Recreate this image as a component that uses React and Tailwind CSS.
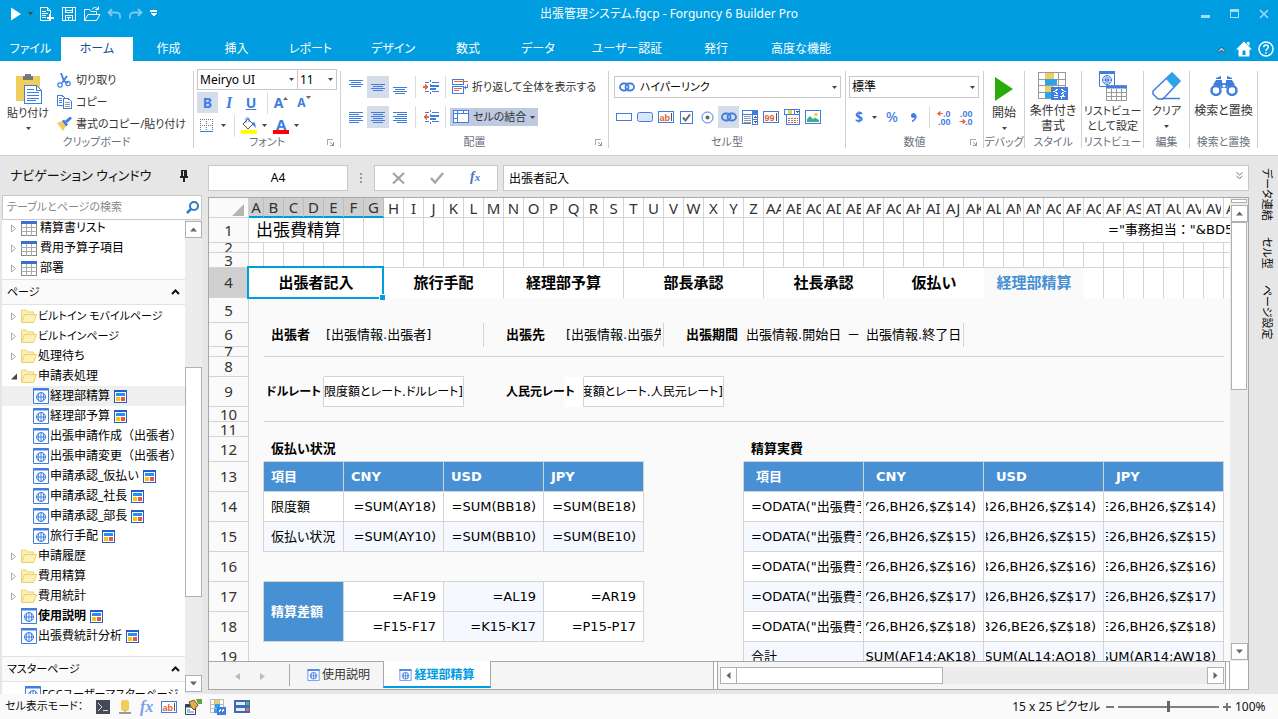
import React from "react";

const BLUE = "#3f7ee0";

/* ---------- small shared drawings ---------- */

function Svg({ w, h, children, crisp = true, className = "" }) {
  return (
    <svg
      width={w}
      height={h}
      viewBox={`0 0 ${w} ${h}`}
      fill="none"
      shapeRendering={crisp ? "crispEdges" : "auto"}
      className={`shrink-0 ${className}`}
      aria-hidden="true"
    >
      {children}
    </svg>
  );
}

const Caret = ({ className = "" }) => (
  <Svg w={5} h={3} crisp={false} className={className}>
    <path d="M0 0H5L2.500 3Z" fill="#444" />
  </Svg>
);

const Launcher = () => (
  <Svg w={7} h={7}>
    <path d="M0.500 6V0.500H6" stroke="#aaa" />
    <path d="M3 3H4V4H3ZM4 4H5V5H4ZM7 3V7H3V6H5V5H6V3Z" fill="#999" />
  </Svg>
);

/* ---------- title bar ---------- */

function TitleBar() {
  return (
    <div className="flex h-[37px] items-center text-white">
      <div className="flex flex-1 items-center pb-[10px] pl-[11px]">
        <button aria-label="実行" className="flex">
          <Svg w={10} h={14} crisp={false}><path d="M0 0.500L10 7L0 13.500Z" fill="#fff" /></Svg>
        </button>
        <Caret className="mx-[7px]" />
        <button aria-label="新規" className="mr-2 flex">
          <Svg w={14} h={15}>
            <path d="M9.500 14.500H0.500V1.500H7.500L10.500 4.500V8M2 5.500H6M2 7.500H8M2 9.500H6M2 11.500H6M7.500 1V4.500H10" stroke="#fff" />
            <path d="M10 8V15M7 12H14" stroke="#fff" strokeWidth="2" />
          </Svg>
        </button>
        <button aria-label="保存" className="mr-2 flex">
          <Svg w={14} h={15}>
            <path d="M0.500 1.500H13.500V14.500H0.500ZM3.500 1.500V6.500H10.500V1.500M3.500 14.500V9.500H10.500V14.500M5 11.500H9M6.500 12V14.500" stroke="#fff" />
            <path d="M3 4.500H11" stroke="#fff" />
          </Svg>
        </button>
        <button aria-label="開く" className="mr-[6px] flex">
          <Svg w={17} h={16} crisp={false}>
            <path d="M0.500 14.500V3.500H5.500L7 5.500H12.500V8M0.500 14.500L4 8.500H16L12.500 14.500Z" stroke="#fff" />
            <path d="M8 3.500C9.500 1 12 1 14 3M14.500 0.500V3.500H11.500" stroke="#fff" />
          </Svg>
        </button>
        <button aria-label="元に戻す" className="mr-2 flex">
          <Svg w={14} h={12} crisp={false}>
            <path d="M5 1L1.500 4.500L5 8M1.500 4.500H9C12 4.500 13.500 6 13 10.500" stroke="#7ec8f0" strokeWidth="1.800" />
          </Svg>
        </button>
        <button aria-label="やり直し" className="mr-[7px] flex">
          <Svg w={14} h={12} crisp={false}>
            <path d="M9 1L12.500 4.500L9 8M12.500 4.500H5C2 4.500 0.500 6 1 10.500" stroke="#7ec8f0" strokeWidth="1.800" />
          </Svg>
        </button>
        <Svg w={7} h={7}><path d="M0 1H7" stroke="#fff" strokeWidth="2" /><path d="M0 3H7L3.500 6.500Z" fill="#fff" /></Svg>
      </div>
      <h1 className="pb-[10px] pl-[58px] text-xs leading-4">出張管理システム.fgcp - Forguncy 6 Builder Pro</h1>
      <div className="flex flex-1 items-center justify-end gap-5 pb-[10px] pr-[9px]">
        <button aria-label="最小化" className="flex"><Svg w={9} h={9}><path d="M0 7.500H9" stroke="#a5dbf6" strokeWidth="3" /></Svg></button>
        <button aria-label="最大化" className="flex"><Svg w={9} h={9}><path d="M0.500 0.500H8.500V8.500H0.500Z" stroke="#a5dbf6" /><path d="M0 1.500H9" stroke="#a5dbf6" strokeWidth="3" /></Svg></button>
        <button aria-label="閉じる" className="flex"><Svg w={10} h={10} crisp={false}><path d="M1 1L9 9M9 1L1 9" stroke="#a5dbf6" strokeWidth="1.500" /></Svg></button>
      </div>
    </div>
  );
}

const TABS = [
  ["ファイル", "w-[61px]"], ["ホーム", "w-[72px]"], ["作成", "w-[71px]"], ["挿入", "w-[65px]"],
  ["レポート", "w-[83px]"], ["デザイン", "w-[82px]"], ["数式", "w-[68px]"], ["データ", "w-[72px]"],
  ["ユーザー認証", "w-[106px]"], ["発行", "w-[72px]"], ["高度な機能", "w-[98px]"],
];

function RibbonTabs() {
  return (
    <nav className="flex h-6 items-stretch">
      {TABS.map(([name, w]) => (
        <button
          key={name}
          className={`${w} text-center text-xs leading-6 ${name === "ホーム" ? "bg-white text-[#1a4f9c]" : "text-white"}`}
        >
          {name}
        </button>
      ))}
      <div className="ml-auto flex items-center gap-[6px] pr-1">
        <button aria-label="リボンを折りたたむ" className="mr-1 flex">
          <Svg w={9} h={7} crisp={false}><path d="M0.500 5L4.500 1L8.500 5L7 6.500L4.500 4L2 6.500Z" fill="#a5dbf6" stroke="#345" strokeWidth="1" /></Svg>
        </button>
        <button aria-label="ホーム画面" className="flex">
          <Svg w={16} h={16} crisp={false}>
            <path d="M8 0.500L16 8.500H13.500V15.500H2.500V8.500H0L8 0.500Z" fill="#fff" />
            <path d="M11 1H13.500V5L11 3Z" fill="#fff" />
            <path d="M6.500 9.500H9.500V14H6.500Z" fill="#009de1" />
          </Svg>
        </button>
        <button aria-label="ヘルプ" className="flex">
          <Svg w={16} h={16} crisp={false}>
            <circle cx="8" cy="8" r="7" stroke="#fff" strokeWidth="1.500" />
            <path d="M5.800 6.200C5.800 3.400 10.300 3.400 10.300 6.200C10.300 7.800 8 7.800 8 10M8 11.300V12.800" stroke="#fff" strokeWidth="1.500" />
          </Svg>
        </button>
      </div>
    </nav>
  );
}

/* ---------- ribbon ---------- */

function Group({ label, width, launcher, children }) {
  return (
    <>
      <section className={`flex shrink-0 flex-col ${width}`}>
        <div className="h-16">{children}</div>
        <div className="relative flex h-[18px] items-center">
          <h2 className="flex-1 text-center text-[11px] leading-[18px] text-[#6a7180]">{label}</h2>
          {launcher && <button aria-label={`${label}の詳細`} className="absolute right-[6px] flex"><Launcher /></button>}
        </div>
      </section>
      <div className="mt-0.5 h-[77px] w-px shrink-0 bg-[#d0d0d0]" />
    </>
  );
}

const VLine = ({ className = "" }) => <div className={`h-[22px] w-px shrink-0 bg-[#dcdcdc] ${className}`} />;

function Drop({ label, value, width, icon, className = "", textClass = "text-xs" }) {
  return (
    <div className={`relative flex items-center border border-[#c8c8c8] bg-white ${width} ${className}`}>
      {icon && <span className="flex pl-1 pr-[3px]">{icon}</span>}
      <select aria-label={label} defaultValue={value} className={`h-full w-full appearance-none bg-transparent pl-[2px] leading-4 text-black outline-none ${textClass}`}>
        <option>{value}</option>
      </select>
      <Caret className="pointer-events-none absolute right-[3px]" />
    </div>
  );
}

const Lines = ({ rows }) => (
  <Svg w={14} h={14}>
    {rows.map(([x, y, w]) => <path key={y} d={`M${x} ${y}h${w}v1h-${w}z`} fill={BLUE} />)}
  </Svg>
);

const V_TOP = [[0, 0, 14], [2, 2, 10], [0, 4, 14], [2, 6, 10]];
const V_MID = [[0, 4, 14], [2, 6, 10], [0, 8, 14], [2, 10, 10]];
const V_BOT = [[0, 7, 14], [2, 9, 10], [0, 11, 14], [2, 13, 10]];
const H_LEFT = [[0, 2, 14], [0, 4, 10], [0, 6, 14], [0, 8, 12], [0, 10, 14], [0, 12, 10]];
const H_MID = [[0, 2, 14], [2, 4, 10], [0, 6, 14], [2, 8, 10], [0, 10, 14], [2, 12, 10]];
const H_RIGHT = [[0, 2, 14], [4, 4, 10], [0, 6, 14], [2, 8, 12], [0, 10, 14], [4, 12, 10]];

function IconButton({ label, active, width = "w-[22px]", children }) {
  return (
    <button aria-label={label} className={`flex h-[22px] shrink-0 items-center justify-center ${width} ${active ? "bg-[#d5dcea]" : ""}`}>
      {children}
    </button>
  );
}

const Indent = ({ out }) => (
  <Svg w={16} h={14}>
    <path d="M7 0H8V2H7ZM7 4H8V6H7ZM7 8H8V10H7ZM7 12H8V14H7Z" fill={BLUE} />
    <path d="M2 2H6V3H2ZM9 2H16V3H9ZM2 11H6V12H2ZM9 11H16V12H9ZM7 5H16V7H7ZM7 8H13V10H7Z" fill={BLUE} />
    <path d={out ? "M0 7L4 4V10Z" : "M6 7L2 4V10Z"} fill="#e8693e" />
    <path d={out ? "M3 6H6V8H3Z" : "M0 6H3V8H0Z"} fill="#e8693e" />
  </Svg>
);

const LinkIcon = () => (
  <Svg w={16} h={10} crisp={false}>
    <rect x="1" y="1.500" width="8.500" height="7" rx="3.500" stroke={BLUE} strokeWidth="1.800" />
    <rect x="6.500" y="1.500" width="8.500" height="7" rx="3.500" stroke={BLUE} strokeWidth="1.800" />
  </Svg>
);

const TextBoxIcon = ({ text = "ab" }) => (
  <Svg w={16} h={12} crisp={false}>
    <rect x="0.500" y="0.500" width="15" height="11" stroke={BLUE} fill="#fff" />
    <text x="1.500" y="9.500" fontSize="9" fontFamily="Liberation Sans, sans-serif" fontWeight="bold" fill="#e0603a">{text}</text>
    <path d="M13.500 2V10" stroke="#555" />
  </Svg>
);

const CELL_TYPES = [
  ["標準セル", <Svg w={16} h={8}><path d="M0.500 0.500H15.500V7.500H0.500Z" stroke={BLUE} fill="#fff" /></Svg>],
  ["ボタン", <Svg w={16} h={10} crisp={false}><rect x="0.500" y="0.500" width="15" height="9" rx="2" stroke={BLUE} fill="#dbe6fb" /></Svg>],
  ["テキストボックス", <TextBoxIcon />],
  ["チェックボックス", <Svg w={13} h={13} crisp={false}><rect x="0.500" y="0.500" width="12" height="12" stroke={BLUE} fill="#fff" /><path d="M3 6.500L5.500 9.500L10 3.500" stroke="#666" strokeWidth="2" /></Svg>],
  ["ラジオボタン", <Svg w={13} h={13} crisp={false}><circle cx="6.500" cy="6.500" r="5.500" stroke={BLUE} fill="#fff" /><circle cx="6.500" cy="6.500" r="2" fill="#666" /></Svg>],
  ["ハイパーリンク", <LinkIcon />],
  ["コンボボックス", <Svg w={16} h={15}><path d="M0.500 0.500H15.500V4.500H0.500ZM0.500 4.500V13.500H9" stroke={BLUE} /><path d="M2 6.500H9M2 8.500H9M2 10.500H9M2 12.500H9" stroke="#999" /><path d="M10.500 0V14.500H15.500V0M10 9.500H16" stroke={BLUE} /><path d="M11 0H16V5H11Z" fill={BLUE} /><path d="M12 8H15L13.500 6ZM12 11H15L13.500 13Z" fill="#555" /></Svg>],
  ["数値", <TextBoxIcon text="99" />],
  ["日付", <Svg w={16} h={16}><path d="M0.500 0.500H15.500V5.500H0.500ZM2.500 5.500V15.500H15.500V5.500" stroke={BLUE} /><path d="M4 1H8V5H4Z" fill="#efc94c" /><path d="M10.500 0V6" stroke={BLUE} /><path d="M12 2H15L13.500 4Z" fill="#555" /><path d="M4 9.500H14M4 13.500H14" stroke="#e0603a" strokeDasharray="2 1" /><path d="M4 11.500H14" stroke="#888" strokeDasharray="2 1" /></Svg>],
  ["画像", <Svg w={16} h={14} crisp={false}><rect x="0.500" y="0.500" width="15" height="13" stroke={BLUE} fill="#fff" /><path d="M2 12V9L5 6L8 9L10 7.500L14 10V12Z" fill="#3fae8c" /><circle cx="11" cy="4.500" r="1.700" fill="#efc94c" /></Svg>],
];

function DecimalIcon({ dec }) {
  return (
    <Svg w={17} h={15} crisp={false}>
      <g fontFamily="Liberation Sans, sans-serif" fontSize="9" fontWeight="bold" fill={BLUE}>
        <text x={dec ? 1 : 6} y="6.500">{dec ? ".00" : ".0"}</text>
        <text x={dec ? 6 : 1} y="14.500">{dec ? ".0" : ".00"}</text>
      </g>
      <path d={dec ? "M6.500 11.500L4 9.500V13.500ZM0.500 11.500H4" : "M0.500 3.500L3 1.500V5.500ZM3 3.500H6"} fill="#e8693e" stroke="#e8693e" />
    </Svg>
  );
}

function BigButton({ lines, caret, icon, iconClass = "h-[34px]", textClass = "text-xs" }) {
  return (
    <button className={`flex w-full flex-col items-center leading-[15px] text-[#333] ${textClass}`}>
      <span className={`flex items-center justify-center ${iconClass}`}>{icon}</span>
      {lines.map((l) => <span key={l} className="leading-[15px]">{l}</span>)}
      {caret && <Caret className="mt-[7px]" />}
    </button>
  );
}

const FontLetter = ({ children, className = "" }) => (
  <span className={`font-bold text-[#3f7ee0] ${className}`}>{children}</span>
);

function Ribbon() {
  return (
    <div className="flex h-[95px] shrink-0 items-start overflow-hidden border-b border-[#cfcfcf] bg-white pt-2">
      <Group label="クリップボード" width="w-[193px]">
        <div className="flex pt-1">
          <div className="w-14">
            <BigButton
              lines={["貼り付け"]}
              caret
              iconClass="h-8 pl-[2px]"
              textClass="text-[11px]"
              icon={
                <Svg w={26} h={30}>
                  <path d="M0 2H24V27H0Z" fill="#f0cd5c" />
                  <path d="M7 6V2H9V0H15V2H17V6Z" fill="#777" />
                  <path d="M8.500 11.500H20.500L25.500 16.500V29.500H8.500Z" fill="#fff" stroke={BLUE} />
                  <path d="M20.500 11V16.500H26M11 15.500H18M11 18.500H23M11 21.500H23M11 24.500H23M11 26.500H20" stroke={BLUE} />
                </Svg>
              }
            />
          </div>
          <ul className="flex-1 pl-[1px] text-[11px] leading-[14px] text-[#333]">
            <li>
              <button className="flex h-[22px] items-center gap-[5px] pb-2">
                <Svg w={14} h={15} crisp={false}>
                  <path d="M4 0L7 8L11 10M10 3L5 10" stroke={BLUE} strokeWidth="1.800" />
                  <circle cx="3" cy="12" r="2.200" stroke={BLUE} strokeWidth="1.200" /><circle cx="11" cy="10.500" r="2.200" stroke={BLUE} strokeWidth="1.200" />
                </Svg>
                切り取り
              </button>
            </li>
            <li>
              <button className="flex h-[22px] items-center gap-1 pb-2">
                <Svg w={15} h={14}>
                  <path d="M0.500 0.500H5L8.500 3.500V10.500H0.500ZM2 3.500H5M2 5.500H5M2 7.500H5" stroke={BLUE} />
                  <path d="M6.500 3.500H11L14.500 6.500V13.500H6.500Z" fill="#fff" stroke={BLUE} /><path d="M8 7.500H13M8 9.500H13M8 11.500H13" stroke="#999" />
                </Svg>
                コピー
              </button>
            </li>
            <li>
              <button className="flex h-[22px] items-center gap-1 pb-2">
                <Svg w={15} h={14} crisp={false}>
                  <path d="M0 6L5 4L9 9L6 14Z" fill="#f0cd5c" /><path d="M5 4L7 2.500L11 7.500L9 9.500Z" fill={BLUE} /><path d="M9 5L14 0.500" stroke={BLUE} strokeWidth="3" />
                </Svg>
                書式のコピー/貼り付け
              </button>
            </li>
          </ul>
        </div>
      </Group>

      <Group label="フォント" width="w-[146px]" launcher>
        <div className="flex flex-col gap-0.5 pl-[3px]">
          <div className="flex h-[21px]">
            <Drop label="フォント名" value="Meiryo UI" width="w-[101px]" />
            <Drop label="フォントサイズ" value="11" width="w-10" className="-ml-px" />
          </div>
          <div className="flex h-[21px] items-center text-sm leading-5">
            <button className="h-[21px] w-[21px] bg-[#d5dcea]"><FontLetter>B</FontLetter></button>
            <button className="w-[22px] font-['Liberation_Serif',serif] text-base"><FontLetter className="italic">I</FontLetter></button>
            <button className="w-[22px]"><FontLetter className="underline">U</FontLetter></button>
            <VLine className="ml-[5px]" />
            <button aria-label="拡大" className="flex w-[26px] items-center justify-center"><FontLetter>A</FontLetter><Svg w={5} h={12} crisp={false}><path d="M0 3H5L2.500 0Z" fill="#666" /></Svg></button>
            <button aria-label="縮小" className="flex w-5 items-center justify-center text-xs"><FontLetter>A</FontLetter><Svg w={5} h={14} crisp={false}><path d="M0 0H5L2.500 3Z" fill="#666" /></Svg></button>
          </div>
          <div className="flex h-[21px] items-center">
            <button aria-label="罫線" className="flex items-center gap-2 pl-[3px]">
              <Svg w={13} h={13}><path d="M0.500 0V11M6.500 0V11M12.500 0V11M0 0.500H13M0 6.500H13" stroke="#777" strokeDasharray="1 1" /><path d="M0 12.500H13" stroke={BLUE} /></Svg>
              <Caret />
            </button>
            <VLine className="ml-2" />
            <button aria-label="塗りつぶし" className="ml-[6px] flex items-center gap-[5px]">
              <Svg w={16} h={17} crisp={false}>
                <path d="M2 7L7 2L12 7L7 12Z" fill="#fff" stroke="#555" /><path d="M5 6V1.500C5 0.500 8 0.500 8 1.500V5" stroke={BLUE} /><path d="M12 5C14 5 15 8 14.500 11C13.500 9 12.500 8 11 8Z" fill={BLUE} /><path d="M0 15H16" stroke="#ff0" strokeWidth="4" />
              </Svg>
              <Caret />
            </button>
            <button aria-label="文字色" className="ml-[6px] flex items-center gap-[5px]">
              <Svg w={16} h={17} crisp={false}><text x="3" y="12.500" fontSize="15" fontWeight="bold" fontFamily="Noto Sans, sans-serif" fill={BLUE}>A</text><path d="M0 15H16" stroke="#f00" strokeWidth="4" /></Svg>
              <Caret />
            </button>
          </div>
        </div>
      </Group>

      <Group label="配置" width="w-[267px]" launcher>
        <div className="flex flex-col gap-2 pl-1 pt-[7px]">
          <div className="flex h-[22px] items-center">
            <IconButton label="上揃え"><Lines rows={V_TOP} /></IconButton>
            <IconButton label="上下中央" active><Lines rows={V_MID} /></IconButton>
            <IconButton label="下揃え"><Lines rows={V_BOT} /></IconButton>
            <VLine className="ml-1 mr-[7px]" />
            <IconButton label="インデント増" width="w-4"><Indent /></IconButton>
            <VLine className="mx-[6px]" />
            <button className="flex items-center gap-1 text-[11px] leading-4 text-[#333]">
              <Svg w={16} h={16}>
                <path d="M0.500 0.500H11.500V5.500H0.500ZM0.500 7.500H11.500V14.500H0.500Z" stroke={BLUE} /><path d="M2 2.500H16" stroke="#e8693e" /><path d="M2 9.500H10M2 11.500H7" stroke="#e8693e" /><path d="M15 5H16V9H14V11L12 8.500L14 6V8H15Z" fill={BLUE} />
              </Svg>
              折り返して全体を表示する
            </button>
          </div>
          <div className="flex h-[22px] items-center">
            <IconButton label="左揃え"><Lines rows={H_LEFT} /></IconButton>
            <IconButton label="左右中央" active><Lines rows={H_MID} /></IconButton>
            <IconButton label="右揃え"><Lines rows={H_RIGHT} /></IconButton>
            <VLine className="ml-1 mr-[7px]" />
            <IconButton label="インデント減" width="w-4"><Indent out /></IconButton>
            <VLine className="ml-[6px] mr-1" />
            <button className="flex h-[18px] items-center gap-1 bg-[#bdcae0] px-[3px] text-[11px] leading-4 text-[#333]">
              <Svg w={16} h={14}><path d="M0.500 0.500H15.500V12.500H0.500ZM4.500 0V13M0 3.500H16M10.500 0V4M0 8.500H4" stroke={BLUE} fill="#fff" /><path d="M4.500 3.500H15.500V12.500H4.500Z" fill="#fff" stroke={BLUE} /></Svg>
              セルの結合
              <Caret />
            </button>
          </div>
        </div>
      </Group>

      <Group label="セル型" width="w-[236px]">
        <div className="flex flex-col gap-2 pl-1 pt-[7px]">
          <Drop label="セル型" value="ハイパーリンク" width="w-[227px] ml-px" className="h-[22px]" textClass="text-[11px]" icon={<LinkIcon />} />
          <div className="flex">
            {CELL_TYPES.map(([name, icon]) => (
              <IconButton key={name} label={name} active={name === "ハイパーリンク"} width="w-[21px]">{icon}</IconButton>
            ))}
          </div>
        </div>
      </Group>

      <Group label="数値" width="w-[137px]" launcher>
        <div className="flex flex-col gap-2 pl-[3px] pt-[7px]">
          <Drop label="表示形式" value="標準" width="w-[130px]" className="h-[22px]" />
          <div className="flex items-center text-sm leading-5">
            <button className="w-5"><FontLetter>$</FontLetter></button>
            <Caret className="mx-[3px]" />
            <button className="w-6"><FontLetter className="font-medium">%</FontLetter></button>
            <button aria-label="桁区切り" className="flex w-5 justify-center"><Svg w={6} h={9} crisp={false}><circle cx="2.500" cy="2.500" r="2.500" fill={BLUE} /><path d="M5 2.500C5 6 3 7.500 1 8.500" stroke={BLUE} strokeWidth="1.500" /></Svg></button>
            <VLine className="ml-[5px] mr-1" />
            <IconButton label="小数点以下を増やす"><DecimalIcon /></IconButton>
            <IconButton label="小数点以下を減らす"><DecimalIcon dec /></IconButton>
          </div>
        </div>
      </Group>

      <Group label="デバッグ" width="w-10">
        <BigButton lines={["開始"]} caret iconClass="h-9 pt-1" icon={<Svg w={18} h={24} crisp={false}><path d="M0 0L18 12L0 24Z" fill="#2bab07" /></Svg>} />
      </Group>

      <Group label="スタイル" width="w-14">
        <BigButton
          lines={["条件付き", "書式"]}
          icon={
            <Svg w={30} h={28}>
              <path d="M0.500 0.500H27.500V26.500H0.500ZM7.500 0V27M20.500 0V27M0 7.500H28M0 13.500H28M0 20.500H28" stroke="#999" />
              <path d="M7 1H16V7H7ZM7 14H16V20H7Z" fill="#f0cd5c" /><path d="M7 7H19V13H7ZM7 20H13V26H7Z" fill="#2aa5ea" /><path d="M13 15H30V28H13Z" fill={BLUE} />
              <path d="M20 17L16 19.500L20 22M16 23.500H20M16 25.500H20M23 17L27 19.500L23 22M22 24.500H27M26 22L23 27" stroke="#fff" />
            </Svg>
          }
        />
      </Group>

      <Group label="リストビュー" width="w-[61px]">
        <BigButton
          lines={["リストビュー", "として設定"]}
          textClass="text-[11px]"
          icon={
            <Svg w={28} h={30} crisp={false}>
              <path d="M0.500 0.500H15.500V15.500H0.500Z" fill="#fff" stroke={BLUE} /><path d="M0 1.500H16" stroke={BLUE} strokeWidth="3" />
              <circle cx="8" cy="9" r="4.500" stroke={BLUE} /><path d="M3.500 9H12.500M8 4.500V13.500M5.500 5.500C7 8 7 10 5.500 12.500M10.500 5.500C9 8 9 10 10.500 12.500" stroke={BLUE} />
              <path d="M7.500 14.500H27.500V29.500H7.500ZM12.500 18V29M17.500 18V29M22.500 18V29M7 21.500H27M7 25.500H27" fill="#fff" stroke="#999" /><path d="M7 16H28" stroke={BLUE} strokeWidth="3" />
            </Svg>
          }
        />
      </Group>

      <Group label="編集" width="w-[45px]">
        <BigButton lines={["クリア"]} caret textClass="text-[11px]" icon={<Svg w={29} h={28} crisp={false}><path d="M1 19L20 1L28 9L11 27H6L1 22Z" fill="#fff" stroke={BLUE} strokeWidth="1.500" /><path d="M14 7L20 1L28 9L22 16Z" fill="#2aa5ea" /><path d="M10 26.500H28" stroke={BLUE} strokeWidth="1.500" /></Svg>} />
      </Group>

      <Group label="検索と置換" width="w-[67px]">
        <BigButton
          lines={["検索と置換"]}
          icon={
            <Svg w={28} h={22} crisp={false}>
              <circle cx="6" cy="15.500" r="4.500" stroke={BLUE} strokeWidth="2.500" /><circle cx="22" cy="15.500" r="4.500" stroke={BLUE} strokeWidth="2.500" />
              <path d="M3 10L6 5H12V12M25 10L22 5H16V12" fill={BLUE} /><path d="M11 8H17V13H11Z" fill={BLUE} /><path d="M6 3L11 1V4H6ZM22 3L17 1V4H22Z" fill={BLUE} /><circle cx="14" cy="11" r="1.500" fill="#fff" />
            </Svg>
          }
        />
      </Group>
    </div>
  );
}

/* ---------- navigation ---------- */

const PageIcon = ({ small }) => (
  <svg width={small ? 13 : 16} height={small ? 12 : 16} viewBox="0 0 16 16" fill="none" className="shrink-0" aria-hidden="true">
    <path d="M0.500 0.500H15.500V15.500H0.500Z" fill="#fff" stroke={BLUE} /><path d="M0 1.500H16" stroke={BLUE} strokeWidth="2" />
    <circle cx="8" cy="9" r="4.500" stroke={BLUE} /><path d="M3.500 9H12.500M8 4.500V13.500M6 5C5 8 5 10 6 13M10 5C11 8 11 10 10 13" stroke={BLUE} />
  </svg>
);

const MasterIcon = () => (
  <Svg w={13} h={13}>
    <path d="M0.500 0.500H12.500V12.500H0.500Z" fill="#fff" stroke="#2b5cc4" /><path d="M0 1H13" stroke="#2b5cc4" strokeWidth="2" /><path d="M2 4.500H11" stroke="#1e90ff" strokeWidth="3" /><path d="M2 7H6V11H2Z" fill="#fbc400" /><path d="M7 7H11V11H7Z" fill="#ee5544" />
  </Svg>
);

const FolderIcon = () => (
  <Svg w={16} h={14} crisp={false}>
    <path d="M0.500 13V2C0.500 1 1 1 1.500 1H5L6.500 3H12.500V5.500" fill="#fdf0b4" stroke="#ecd06c" /><path d="M0.500 13.500L3.500 5.500H15.500L12.500 13.500Z" fill="#fdf0b4" stroke="#ecd06c" />
  </Svg>
);

const TableIcon = () => (
  <Svg w={16} h={15}>
    <path d="M0.500 0.500H15.500V14.500H0.500Z" fill="#fff" stroke="#888" /><path d="M0 1.500H16" stroke="#3c70d0" strokeWidth="3" /><path d="M5.500 3V15M10.500 3V15M0 6.500H16M0 10.500H16" stroke="#aaa" />
  </Svg>
);

const Expander = ({ open }) => (
  <Svg w={6} h={9} crisp={false}>
    {open ? <path d="M6 1.500V7.500H0Z" fill="#444" /> : <path d="M0.500 1L4.500 4.500L0.500 8Z" stroke="#aaa" />}
  </Svg>
);

const TABLES = ["精算書リスト", "費用予算子項目", "部署"];
const PAGES = [
  { t: "ビルトイン モバイルページ", folder: true, kana: true },
  { t: "ビルトインページ", folder: true, kana: true },
  { t: "処理待ち", folder: true },
  { t: "申請表処理", folder: true, open: true },
  { t: "経理部精算", sub: true, m: true, on: true },
  { t: "経理部予算", sub: true, m: true },
  { t: "出張申請作成（出張者）", sub: true },
  { t: "出張申請変更（出張者）", sub: true },
  { t: "申請承認_仮払い", sub: true, m: true },
  { t: "申請承認_社長", sub: true, m: true },
  { t: "申請承認_部長", sub: true, m: true },
  { t: "旅行手配", sub: true, m: true },
  { t: "申請履歴", folder: true },
  { t: "費用精算", folder: true },
  { t: "費用統計", folder: true },
  { t: "使用説明", m: true, bold: true },
  { t: "出張費統計分析", m: true },
];

function SectionHead({ children }) {
  return (
    <button className="flex h-[26px] w-full shrink-0 items-center justify-between border-y border-[#e2e2e2] bg-[#fafafa] pl-[5px] pr-[5px] text-[11px]">
      {children}
      <Svg w={9} h={6} crisp={false}><path d="M1 5L4.500 1.500L8 5" stroke="#111" strokeWidth="2" /></Svg>
    </button>
  );
}

const ArrowBox = ({ d, label }) => (
  <button aria-label={label} className="flex h-[17px] w-[17px] shrink-0 items-center justify-center border border-[#b0b0b0] bg-white">
    <Svg w={7} h={7} crisp={false}><path d={d} fill="#666" /></Svg>
  </button>
);
const UP = "M0 5.500H7L3.500 1.500Z";
const DOWN = "M0 1.500H7L3.500 5.500Z";
const LEFT = "M5.500 0V7L1.500 3.500Z";
const RIGHT = "M1.500 0V7L5.500 3.500Z";

function Navigation() {
  return (
    <aside className="flex w-[202px] shrink-0 flex-col pl-0.5">
      <div className="flex h-[39px] shrink-0 items-center justify-between pl-2 pr-[14px]">
        <h2 className="text-[13px] text-[#111]">ナビゲーション ウィンドウ</h2>
        <button aria-label="固定" className="flex"><Svg w={8} h={12}><path d="M1 0H7V6H8V8H0V6H1Z" fill="#222" /><path d="M3 1H4V6H3Z" fill="#ddd" /><path d="M3 8H5V12H3Z" fill="#222" /></Svg></button>
      </div>
      <div className="flex h-[25px] shrink-0 items-center border border-[#c8c8c8] bg-white pr-0.5">
        <input aria-label="検索" placeholder="テーブルとページの検索" className="min-w-0 flex-1 pl-1 text-[11px] outline-none placeholder:text-[#888]" />
        <Svg w={13} h={13} crisp={false}><circle cx="8" cy="5" r="4" stroke="#2f78cc" strokeWidth="2" /><path d="M5 8L1 12" stroke="#2f78cc" strokeWidth="2.500" /></Svg>
      </div>
      <div className="flex min-h-0 flex-1">
        <div className="flex min-w-0 flex-1 flex-col overflow-hidden bg-white">
          <ul className="h-[59px] shrink-0 text-xs">
            {TABLES.map((t) => (
              <li key={t} className="flex h-5 items-center gap-[3px] pb-1 pl-[9px]">
                <Expander /><span className="flex pl-px"><TableIcon /></span>{t}
              </li>
            ))}
          </ul>
          <SectionHead>ページ</SectionHead>
          <ul className="shrink-0 pb-[10px] pt-px text-xs">
            {PAGES.map((p) => (
              <li key={p.t} className={`flex h-5 items-center whitespace-nowrap pl-[9px] ${p.on ? "bg-[#efefef]" : ""} ${p.bold ? "font-bold" : ""}`}>
                <span className={`flex shrink-0 ${p.sub ? "w-[22px]" : "w-[10px]"}`}>{p.folder && <Expander open={p.open} />}</span>
                {p.folder ? <FolderIcon /> : <PageIcon />}
                <span className={`pl-px ${p.sub ? "[font-feature-settings:normal]" : ""} ${p.kana ? "text-[11px]" : ""}`}>{p.t}</span>
                {p.m && <span className="pl-1"><MasterIcon /></span>}
              </li>
            ))}
          </ul>
          <SectionHead>マスターページ</SectionHead>
          <ul className="text-[11px]">
            <li className="flex h-6 items-center gap-px whitespace-nowrap pl-[23px]"><PageIcon />FGCユーザーマスターページ</li>
          </ul>
        </div>
        <div className="flex w-[17px] shrink-0 flex-col bg-[#ececec] pt-px">
          <ArrowBox d={UP} label="上へ" />
          <div className="flex flex-1 flex-col">
            <div className="flex-[129]" />
            <div className="flex-[227] border border-[#b0b0b0] bg-white" />
            <div className="flex-[78]" />
          </div>
          <div className="flex pb-[2px]"><ArrowBox d={DOWN} label="下へ" /></div>
        </div>
      </div>
    </aside>
  );
}

/* ---------- sheet data ---------- */

const COLS = 50;
const colName = (i) => (i < 26 ? String.fromCharCode(65 + i) : "A" + String.fromCharCode(65 + i - 26));

const G = "border-[#d4d4d4]";
const GRID = `border-r border-b ${G}`;
const PLAIN = "bg-[#fafafa]";
const LINE = `bg-[#fafafa] border-b ${G}`;
const RIGHTLINE = `bg-[#fafafa] border-r ${G}`;
const W = `bg-white ${GRID}`;
const L = `bg-[#f5f9ff] ${GRID}`;
const H = `bg-[#4790d3] ${GRID} text-white font-bold`;
const TAB = `bg-white border-r ${G} text-[15px] font-bold`;

const fill = (span, cls) => ({ span, cls });
const tabCell = (span, t, extra = {}) => ({ span, t, cls: TAB, inner: "justify-center", ...extra });
const label = (span, t, inner = "pl-[2px]") => ({ span, t, inner, cls: `${PLAIN} font-bold` });
const left = (span, t, cls, inner = "pl-[7px]") => ({ span, t, cls, inner });
const right = (span, t, cls) => ({ span, t, cls, inner: "justify-end", clip: "ml-[2px] mr-[7px]" });

const odata = (row, cls, usd = "BB26,BH26") => [
  left(6, '=ODATA("出張費予算")', cls, "pl-[7px] mr-[2px]"),
  right(6, `AY26,BH26,$Z$${row})`, cls),
  right(6, `${usd},$Z$${row})`, cls),
  right(6, `BE26,BH26,$Z$${row})`, cls),
  fill(1, PLAIN),
];

const ROWS = [
  { h: "h-[25px]", blank: GRID, cells: [left(5, "出張費精算", `${GRID} text-[17px]`), ...Array.from({ length: 36 }, () => fill(1, GRID)), left(9, '="事務担当："&BD5', `${GRID} [font-feature-settings:normal]`, "pl-[44px]")] },
  { h: "h-[10px]", blank: GRID, cells: [] },
  { h: "h-[15px]", blank: GRID, cells: [] },
  { h: "h-[30px]", blank: `border-r ${G}`, cells: [
    tabCell(7, "出張者記入", { selected: true }), tabCell(6, "旅行手配"), tabCell(6, "経理部予算"), tabCell(7, "部長承認"), tabCell(6, "社長承認"),
    tabCell(5, "仮払い", { cls: "bg-white text-[15px] font-bold" }), tabCell(5, "経理部精算", { cls: `${PLAIN} text-[15px] font-bold text-[#4790d3]` }),
  ] },
  { h: "h-[25px]", cells: [fill(50, PLAIN)] },
  { h: "h-[24px]", cells: [
    fill(1, PLAIN), label(3, "出張者", "pl-[7px]"), left(8, "[出張情報.出張者]", RIGHTLINE, "pl-[2px]"), fill(1, PLAIN), label(3, "出張先"),
    left(5, "[出張情報.出張先]", RIGHTLINE, "pl-[2px] mr-[2px]"), fill(1, PLAIN), label(3, "出張期間"), left(5, "出張情報.開始日", PLAIN, "pl-[2px]"),
    left(1, "－", PLAIN, "pl-[3px]"), left(5, "出張情報.終了日", RIGHTLINE, "pl-[2px]"), fill(14, PLAIN),
  ] },
  { h: "h-[10px]", cells: [fill(1, PLAIN), fill(48, LINE), fill(1, PLAIN)] },
  { h: "h-[20px]", cells: [fill(4, PLAIN), fill(7, LINE), fill(6, PLAIN), fill(7, LINE), fill(26, PLAIN)] },
  { h: "h-[30px]", cells: [
    fill(1, PLAIN), { span: 3, t: "ドルレート", inner: "pl-[2px]", cls: `${RIGHTLINE} text-xs font-bold` },
    { span: 7, t: "[限度額とレート.ドルレート]", cls: `${W} text-xs`, inner: "justify-end" },
    fill(2, PLAIN), { span: 3, t: "人民元レート", inner: "pl-[2px]", cls: `${PLAIN} z-10 text-xs font-bold`, spill: true }, fill(1, `bg-white border-r ${G}`),
    { span: 7, t: "[限度額とレート.人民元レート]", cls: `${W} text-xs`, inner: "justify-end" }, fill(26, PLAIN),
  ] },
  { h: "h-[15px]", cells: [fill(1, PLAIN), fill(48, LINE), fill(1, PLAIN)] },
  { h: "h-[15px]", cells: [fill(50, PLAIN)] },
  { h: "h-[25px]", cells: [
    fill(1, PLAIN), { span: 19, t: "仮払い状況", cls: `${LINE} font-bold`, inner: "pl-[7px]" }, fill(5, PLAIN),
    { span: 24, t: "精算実費", cls: `${LINE} font-bold`, inner: "pl-[7px]" }, fill(1, PLAIN),
  ] },
  { h: "h-[30px]", cells: [
    fill(1, RIGHTLINE), left(4, "項目", H), left(5, "CNY", H), left(5, "USD", H), left(5, "JPY", H), fill(5, RIGHTLINE),
    left(6, "項目", H, "pl-3"), left(6, "CNY", H, "pl-3"), left(6, "USD", H, "pl-3"), left(6, "JPY", H, "pl-3"), fill(1, PLAIN),
  ] },
  { h: "h-[30px]", cells: [fill(1, RIGHTLINE), left(4, "限度額", W), right(5, "=SUM(AY18)", W), right(5, "=SUM(BB18)", W), right(5, "=SUM(BE18)", W), fill(5, RIGHTLINE), ...odata(14, W)] },
  { h: "h-[30px]", cells: [fill(1, RIGHTLINE), left(4, "仮払い状況", L), right(5, "=SUM(AY10)", L), right(5, "=SUM(BB10)", L), right(5, "=SUM(BE10)", L), fill(5, RIGHTLINE), ...odata(15, L)] },
  { h: "h-[30px]", cells: [fill(1, PLAIN), fill(19, LINE), fill(5, RIGHTLINE), ...odata(16, W)] },
  { h: "h-[30px]", cells: [fill(1, RIGHTLINE), { span: 4, rows: 2, t: "精算差額", cls: H, inner: "pl-[7px]" }, right(5, "=AF19", W), right(5, "=AL19", L), right(5, "=AR19", W), fill(5, RIGHTLINE), ...odata(17, L)] },
  { h: "h-[30px]", skip: 4, cells: [fill(1, RIGHTLINE), right(5, "=F15-F17", W), right(5, "=K15-K17", L), right(5, "=P15-P17", W), fill(5, RIGHTLINE), ...odata(18, W, "BB26,BE26")] },
  { h: "h-[30px]", cells: [fill(20, PLAIN), fill(5, RIGHTLINE), left(6, "合計", L), right(6, "=SUM(AF14:AK18)", L), right(6, "=SUM(AL14:AO18)", L), right(6, "=SUM(AR14:AW18)", L), fill(1, PLAIN)] },
];

function Cell({ cell }) {
  return (
    <td colSpan={cell.span} rowSpan={cell.rows} className={`relative p-0 ${cell.cls}`}>
      {cell.t && (
        <div className={`flex h-5 items-center whitespace-nowrap leading-5 ${cell.spill ? "" : "overflow-hidden"} ${cell.clip ?? ""} ${cell.inner}`}>
          <span className="shrink-0">{cell.t}</span>
        </div>
      )}
      {cell.selected && (
        <div className="pointer-events-none absolute -bottom-px -left-0.5 -right-px -top-0.5 z-10 border-2 border-[#009de1]">
          <div className="absolute -bottom-[3px] -right-[3px] h-[6px] w-[6px] border-l border-t border-white bg-[#009de1]" />
        </div>
      )}
    </td>
  );
}

function Sheet() {
  return (
    <div className="min-h-0 min-w-0 overflow-hidden bg-[#fafafa]">
      <table className="w-[1035px] table-fixed border-separate border-spacing-0 bg-white font-['DejaVu_Sans','Noto_Sans_CJK_JP',sans-serif] text-[13px] text-black">
        <colgroup>
          <col className="w-10" />
          <col className="w-[15px]" />
          {Array.from({ length: COLS - 1 }, (_, i) => <col key={i} className="w-5" />)}
        </colgroup>
        <thead>
          <tr className="h-5 font-['Noto_Sans',sans-serif] text-[15px] leading-[18px] text-[#333]">
            <th className="border-b border-r border-[#d4d4d4] bg-[#fafafa] p-0">
              <div className="flex justify-end pr-1 pt-1"><Svg w={12} h={12} crisp={false}><path d="M12 0V12H0Z" fill="#b4b4b4" /></Svg></div>
            </th>
            {Array.from({ length: COLS }, (_, i) => (
              <th key={i} scope="col" className={`border-r p-0 font-normal ${i < 7 ? "border-b-2 border-b-[#009de1] border-r-[#bdbdbd] bg-[#cfcfcf]" : "border-b border-[#d4d4d4] bg-white"}`}>
                <div className={`flex h-[18px] overflow-hidden ${i < 26 ? "justify-center" : "mx-[2px]"}`}>{colName(i)}</div>
              </th>
            ))}
          </tr>
        </thead>
        <tbody>
          {ROWS.map((row, r) => {
            const used = row.cells.reduce((n, c) => n + c.span, row.skip ?? 0);
            return (
              <tr key={r} className={row.h}>
                <th scope="row" className={`border-b border-r border-[#d4d4d4] p-0 font-['Noto_Sans',sans-serif] text-[15px] font-normal text-[#333] ${r === 3 ? "bg-[#cfcfcf]" : "bg-[#fafafa]"}`}>
                  <div className={`flex items-center justify-center overflow-hidden ${r === 1 || r === 6 ? "h-[9px]" : "h-[14px]"}`}>{r + 1}</div>
                </th>
                {row.cells.map((c, i) => <Cell key={i} cell={c} />)}
                {Array.from({ length: COLS - used }, (_, i) => <td key={`b${i}`} className={`p-0 ${row.blank ?? PLAIN}`} />)}
              </tr>
            );
          })}
        </tbody>
      </table>
    </div>
  );
}

function VerticalScroll() {
  return (
    <div className="flex flex-col items-center bg-[#ececec] pt-px">
      <div className="mb-0.5 h-1 w-4 border border-[#b0b0b0] bg-white" />
      <ArrowBox d={UP} label="上へスクロール" />
      <div className="flex w-4 flex-1 flex-col">
        <div className="flex-[167] border border-[#b0b0b0] bg-white" />
        <div className="flex-[254]" />
      </div>
      <ArrowBox d={DOWN} label="下へスクロール" />
      <div className="h-px" />
    </div>
  );
}

function SheetTabs() {
  return (
    <div className="flex items-stretch border-t border-[#a8a8a8] bg-[#f5f5f5]">
      <div className="flex flex-1 items-start">
        <div className="flex w-[80px] items-center gap-[18px] pl-[25px] pt-[11px]">
          <button aria-label="前のシート" className="flex"><Svg w={7} h={7} crisp={false}><path d="M6 0V7L1 3.500Z" fill="#bbb" /></Svg></button>
          <button aria-label="次のシート" className="flex"><Svg w={7} h={7} crisp={false}><path d="M1 0V7L6 3.500Z" fill="#bbb" /></Svg></button>
        </div>
        <div className="mt-[2px] h-[22px] w-px bg-[#a8a8a8]" />
        <button className="flex h-[26px] w-[93px] items-center justify-center gap-0.5 pl-1 text-xs text-[#333]"><PageIcon small />使用説明</button>
        <button className="-mt-px flex h-[27px] w-[108px] items-center justify-center gap-0.5 border-b-2 border-x border-b-[#009de1] border-x-[#a8a8a8] bg-white pt-[3px] text-xs font-bold text-[#009de1]"><PageIcon small />経理部精算</button>
      </div>
      <div className="w-[5px] border-x border-[#a8a8a8] bg-white" />
      <div className="flex flex-1 items-center bg-[#f5f5f5] pl-0.5">
        <div className="flex flex-1 bg-[#ececec]">
          <ArrowBox d={LEFT} label="左へスクロール" />
          <div className="flex flex-1">
            <div className="flex-[205] border border-l-0 border-[#b0b0b0] bg-white" />
            <div className="flex-[263]" />
          </div>
          <ArrowBox d={RIGHT} label="右へスクロール" />
        </div>
      </div>
      <div className="ml-px w-[5px] border-x border-[#a8a8a8] bg-white" />
    </div>
  );
}

function Workspace() {
  return (
    <main className="ml-[6px] flex min-w-0 flex-1 flex-col">
      <div className="mb-[6px] mt-[9px] flex h-[26px] shrink-0 text-xs">
        <input aria-label="名前ボックス" defaultValue="A4" className="w-[140px] border border-[#c8c8c8] bg-white text-center outline-none" />
        <div className="flex w-[26px] flex-col items-center justify-center gap-0.5">
          {[0, 1, 2].map((i) => <span key={i} className="h-0.5 w-0.5 bg-[#999]" />)}
        </div>
        <div className="flex w-[124px] items-center justify-around border border-[#c8c8c8] bg-white px-1">
          <button aria-label="キャンセル" className="flex"><Svg w={13} h={12} crisp={false}><path d="M1 1L12 11.500M12 1L1 11.500" stroke="#a0a0a0" strokeWidth="2" /></Svg></button>
          <button aria-label="入力" className="flex"><Svg w={14} h={12} crisp={false}><path d="M1 6L5 10.500L13 1" stroke="#a8a8a8" strokeWidth="2.500" /></Svg></button>
          <button className="pb-0.5 font-['Liberation_Serif',serif] text-sm font-bold italic leading-5 text-[#4a72c0]">f<span className="text-[11px]">x</span></button>
        </div>
        <div className="ml-[5px] flex flex-1 items-start border border-[#c8c8c8] bg-white">
          <input aria-label="数式バー" defaultValue="出張者記入" className="h-6 min-w-0 flex-1 px-[5px] outline-none" />
          <Svg w={7} h={8} crisp={false} className="mr-[5px] mt-[6px]"><path d="M0.500 0.500L3.500 3L6.500 0.500M0.500 4L3.500 6.500L6.500 4" stroke="#777" /></Svg>
        </div>
      </div>
      <div className="mb-1 grid min-h-0 flex-1 grid-cols-[minmax(0,1fr)_18px] grid-rows-[minmax(0,1fr)_28px] border border-[#a8a8a8] bg-white">
        <Sheet />
        <VerticalScroll />
        <SheetTabs />
        <div className="bg-white" />
      </div>
    </main>
  );
}

/* ---------- status bar ---------- */

function StatusBar() {
  return (
    <footer className="flex h-[25px] shrink-0 items-center bg-[#fafafa] pl-[5px] pr-[10px] text-xs text-[#111]">
      <span className="w-[91px] text-[11px]">セル表示モード：</span>
      <div className="flex items-center gap-2">
        <Svg w={14} h={14}><path d="M0 0H14V14H0Z" fill="#444b57" /><path d="M2 3L6 7L2 11M7 10.500H12" stroke="#cde" /></Svg>
        <Svg w={14} h={14} crisp={false}><rect x="3" y="0" width="8" height="11" rx="2" fill="#f0cd5c" /><path d="M1 13H13" stroke="#999" strokeWidth="2" /><path d="M7 10V13" stroke="#999" /></Svg>
        <span className="font-['Liberation_Serif',serif] text-base font-bold italic leading-4 text-[#7a9fe8]">fx</span>
        <TextBoxIcon />
        <Svg w={17} h={16} crisp={false}><path d="M0.500 5.500H10.500V15.500H0.500Z" fill="#fff" stroke="#345" /><path d="M0 7H11" stroke="#345" strokeWidth="3" /><path d="M2 11H5M2 13H9" stroke={BLUE} /><path d="M4 3L9 1L13 6L9 11L6 8Z" fill="#e2ac52" stroke="#7a5520" /><path d="M11 0H17V5H13Z" fill="#68a043" /></Svg>
        <Svg w={16} h={16}><path d="M0.500 0.500H13.500V13.500H0.500ZM4.500 0V14M9.500 0V14M0 5.500H14M0 9.500H14" stroke="#bbb" /><path d="M5 1H9V5H5Z" fill="#f0cd5c" /><path d="M5 5H10V9H5ZM4 10H7V14H4Z" fill="#2aa5ea" /><path d="M7 8H16V16H7Z" fill={BLUE} /><path d="M9 13L11 10M12 13L14 10" stroke="#fff" /></Svg>
        <Svg w={16} h={13}><path d="M0 0H16V13H0Z" fill="#3f6ab8" /><path d="M2 2H11V5H2ZM2 8H11V11H2Z" fill="#e4ecf8" /><path d="M12 2H15V5H12Z" fill="#5cb870" /><path d="M12 8H15V11H12Z" fill="#e06a50" /></Svg>
      </div>
      <div className="ml-auto flex items-center">
        <span>15 x 25 ピクセル</span>
        <button aria-label="縮小表示" className="ml-[6px] flex"><Svg w={8} h={8}><path d="M0 4H8" stroke="#777" strokeWidth="2" /></Svg></button>
        <input
          type="range"
          aria-label="ズーム"
          defaultValue="50"
          className="mx-1 h-3 w-[101px] appearance-none bg-[linear-gradient(#808080,#808080)] bg-[length:100%_2px] bg-center bg-no-repeat [&::-webkit-slider-thumb]:h-[11px] [&::-webkit-slider-thumb]:w-[3px] [&::-webkit-slider-thumb]:appearance-none [&::-webkit-slider-thumb]:bg-[#666]"
        />
        <button aria-label="拡大表示" className="mr-1 flex"><Svg w={8} h={8}><path d="M0 4H8M4 0V8" stroke="#777" strokeWidth="2" /></Svg></button>
        <span className="w-[33px]">100%</span>
      </div>
    </footer>
  );
}

export default function App() {
  return (
    <div className="flex h-screen flex-col overflow-hidden whitespace-nowrap bg-[#e6e6e6] font-['Noto_Sans','Noto_Sans_CJK_JP',sans-serif] text-black [font-feature-settings:'palt']">
      <header className="shrink-0 bg-[#009de1]">
        <TitleBar />
        <RibbonTabs />
      </header>
      <Ribbon />
      <div className="flex min-h-0 flex-1">
        <Navigation />
        <Workspace />
        <aside className="flex w-[29px] shrink-0 flex-col items-center gap-4 pl-[7px] pt-3 text-[11px]">
          {["データ連結", "セル型", "ページ設定"].map((t) => (
            <button key={t} className="[text-orientation:sideways] [writing-mode:vertical-rl]">{t}</button>
          ))}
        </aside>
      </div>
      <StatusBar />
    </div>
  );
}
